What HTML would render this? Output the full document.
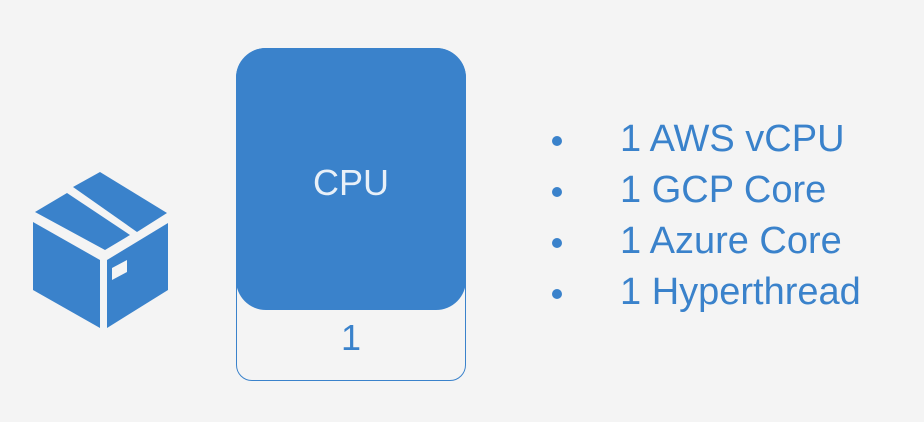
<!DOCTYPE html>
<html><head><meta charset="utf-8"><style>
html,body{margin:0;padding:0}
body{width:924px;height:422px;background:#f4f4f4;position:relative;overflow:hidden;font-family:"Liberation Sans",sans-serif}
.outer{position:absolute;left:236px;top:48px;width:230px;height:333px;border:1.6px solid #3a82cb;border-radius:30px 30px 16px 16px;box-sizing:border-box}
.cpu{position:absolute;left:236px;top:48px;width:230px;height:262px;background:#3a82cb;border-radius:30px}
.cpu span{position:absolute;left:0;right:0;text-align:center;color:#e8f0f8;font-size:36px;line-height:1;top:117px}
.one{position:absolute;left:236px;width:230px;top:320px;text-align:center;color:#3a82cb;font-size:36px;line-height:1}
.list{position:absolute;left:548px;top:0;color:#3a82cb;font-size:38px}
.list div{position:absolute;left:0;white-space:nowrap;line-height:1}
.list b{display:inline-block;width:10px;height:10px;border-radius:50%;background:#3a82cb;position:absolute;left:4px;top:16px}
.list span{position:absolute;left:72px;top:0}
</style></head><body>
<svg style="position:absolute;left:0;top:0" width="200" height="360">
<g fill="#3a82cb">
<polygon points="73,187 100,172 167,213 137,232"/>
<polygon points="35,212 67,193 130,235 105,250"/>
<polygon points="33,222 100,260 100,328 33,290"/>
<polygon points="107,260 168,223 168,290 107,328"/>
</g>
<polygon fill="#f4f4f4" points="112,268 127,260 127,272 112,280"/>
</svg>
<div class="outer"></div>
<div class="cpu"><span>CPU</span></div>
<div class="one">1</div>
<div class="list">
<div style="top:120px"><b></b><span>1 AWS vCPU</span></div>
<div style="top:171px"><b></b><span>1 GCP Core</span></div>
<div style="top:222px"><b></b><span>1 Azure Core</span></div>
<div style="top:273px"><b></b><span>1 Hyperthread</span></div>
</div>
</body></html>
